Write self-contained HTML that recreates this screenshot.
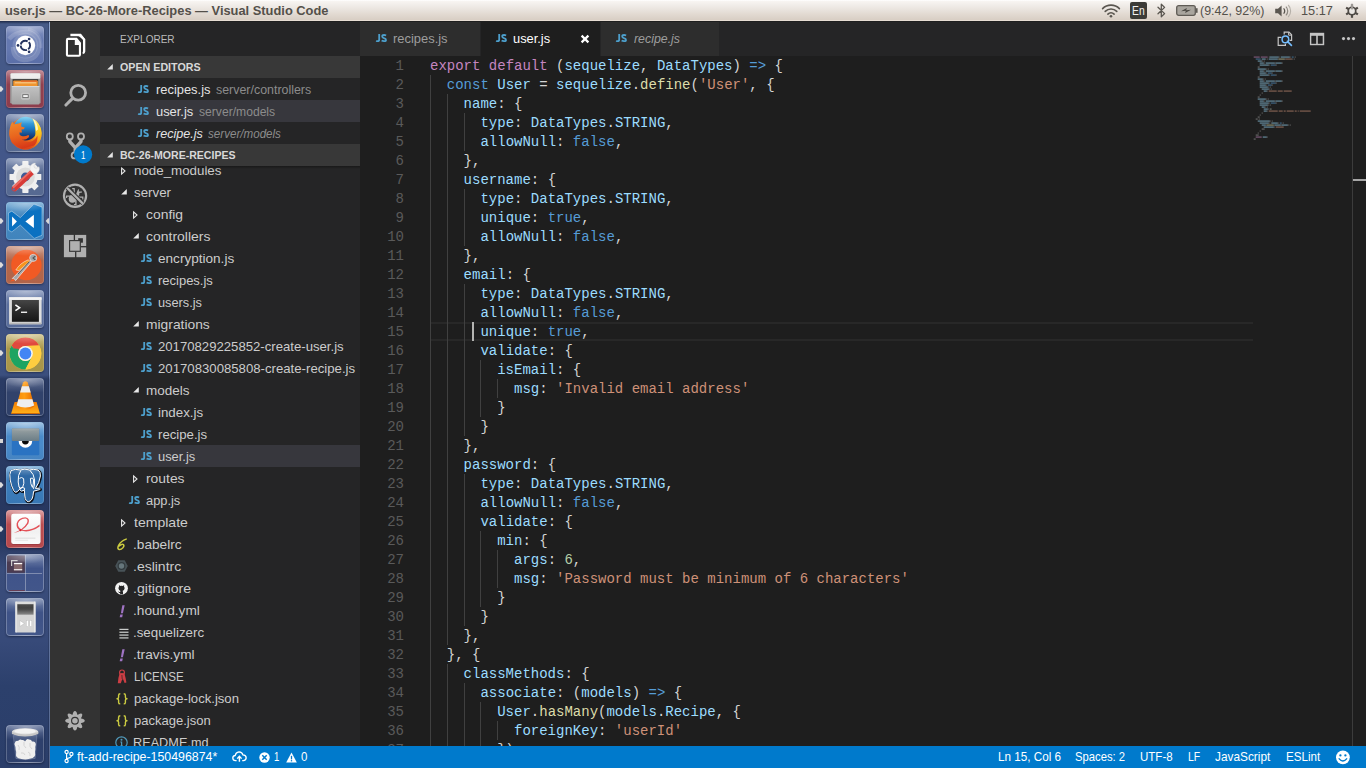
<!DOCTYPE html>
<html><head><meta charset="utf-8"><title>user.js</title>
<style>*{margin:0;padding:0;box-sizing:border-box}
html,body{width:1366px;height:768px;overflow:hidden;background:#1e1e1e;font-family:"Liberation Sans",sans-serif;}
.abs{position:absolute}
svg{position:absolute;overflow:visible}
#panel{position:absolute;left:0;top:0;width:1366px;height:21px;background:linear-gradient(#ffffff 0px,#f7f4f1 1.5px,#ece7e2 8px,#e2dad2 14px,#d9cfc5 19.5px,#e7ddd3 20px,#e7ddd3 21px);}
#launcher{position:absolute;left:0;top:21px;width:50px;height:747px;background:linear-gradient(#465a87 0px,#42568a 180px,#3b4f7e 354px,#2a3b64 358px,#27375f 520px,#3a4d7b 548px,#374a79 620px,#2c406c 665px,#2b3e6a 747px);}
#act{position:absolute;left:50px;top:21px;width:50px;height:725px;background:#333333;}
#side{position:absolute;left:100px;top:21px;width:260px;height:725px;background:#252526;}
#tabs{position:absolute;left:360px;top:21px;width:1006px;height:35px;background:#252526;}
#editor{position:absolute;left:360px;top:56px;width:1006px;height:690px;background:#1e1e1e;overflow:hidden;}
#status{position:absolute;left:50px;top:746px;width:1316px;height:22px;background:#007acc;}
.t{position:absolute;white-space:nowrap;transform-origin:0 50%;}
.hdr{position:absolute;left:100px;width:260px;height:22px;background:#383838;}
.row{position:absolute;left:100px;width:260px;height:22px;}
.sel{background:#37373d;}
.code{position:absolute;left:70px;height:19px;line-height:19px;font-family:"Liberation Mono",monospace;font-size:14px;color:#d4d4d4;white-space:pre;}
.ln{position:absolute;left:0;width:44px;text-align:right;height:19px;line-height:19px;font-family:"Liberation Mono",monospace;font-size:14px;color:#5a5a5a;}
.k{color:#c586c0}.b{color:#569cd6}.v{color:#9cdcfe}.s{color:#ce9178}.f{color:#dcdcaa}.n{color:#b5cea8}
.g{position:absolute;width:1px;background:#404040;}
.tile{position:absolute;left:6px;width:38px;height:38px;border-radius:4px;overflow:hidden}
</style></head>
<body>
<div id="panel"><span class="t" style="left:4.83px;top:2.50px;font-size:13px;line-height:16px;color:#54504a;font-weight:bold;transform:scaleX(0.9892);">user.js — BC-26-More-Recipes — Visual Studio Code</span><svg style="left:1101px;top:4px" width="20" height="14" viewBox="0 0 20 14">
<g fill="none" stroke="#5a5650" stroke-width="1.6" stroke-linecap="round">
<path d="M1.6 4.6 A11.8 11.8 0 0 1 18.4 4.6"/>
<path d="M4.2 7.4 A8.2 8.2 0 0 1 15.8 7.4"/>
<path d="M6.9 10.1 A4.4 4.4 0 0 1 13.1 10.1"/>
</g><circle cx="10" cy="12.3" r="1.3" fill="#5a5650"/></svg><div class="abs" style="left:1130px;top:2px;width:17px;height:17px;background:#3c3b37;border-radius:2px"></div><span class="t" style="left:1132.29px;top:2.84px;font-size:12px;line-height:16px;color:#f2f1ef;transform:scaleX(0.8607);">En</span><svg style="left:1156px;top:3px" width="11" height="15" viewBox="0 0 11 15">
<path d="M2 4.2 L8.6 10.6 L5.3 13.8 L5.3 1.2 L8.6 4.4 L2 10.8" fill="none" stroke="#5a5650" stroke-width="1.3" stroke-linejoin="round" stroke-linecap="round"/></svg><svg style="left:1176px;top:5px" width="22" height="11" viewBox="0 0 22 11">
<rect x="0.7" y="0.7" width="18.6" height="9.6" rx="2" fill="#a9a59e" stroke="#5f5b55" stroke-width="1.3"/>
<rect x="20" y="3.2" width="1.6" height="4.6" fill="#5f5b55"/>
<path d="M5 6.2 L10.8 3 L10.2 5.2 L15 4.8 L9.2 8 L9.8 5.8 Z" fill="#4a4742"/></svg><span class="t" style="left:1200.01px;top:2.50px;font-size:13px;line-height:16px;color:#54504a;transform:scaleX(0.9585);">(9:42, 92%)</span><svg style="left:1274px;top:4px" width="18" height="14" viewBox="0 0 18 14">
<path d="M1.2 4.8 H4 L7.6 1.6 V12.4 L4 9.2 H1.2 Z" fill="#5a5650"/>
<path d="M9.6 4.4 A3.6 3.6 0 0 1 9.6 9.6" fill="none" stroke="#5a5650" stroke-width="1.3"/>
<path d="M11.9 2.6 A6.2 6.2 0 0 1 11.9 11.4" fill="none" stroke="#8d8881" stroke-width="1.2"/>
<path d="M14.2 1 A8.6 8.6 0 0 1 14.2 13" fill="none" stroke="#b5b0a8" stroke-width="1.1"/></svg><span class="t" style="left:1300.89px;top:2.50px;font-size:13px;line-height:16px;color:#54504a;transform:scaleX(0.9799);">15:17</span><svg style="left:1344px;top:3px" width="16" height="16" viewBox="0 0 16 16">
<g stroke="#4e4a45" stroke-width="2.2" stroke-linecap="butt">
<path d="M8 8 L8 1.2"/><path d="M8 8 L13.9 4.6"/><path d="M8 8 L13.9 11.4"/><path d="M8 8 L8 14.8"/><path d="M8 8 L2.1 11.4"/><path d="M8 8 L2.1 4.6"/></g>
<circle cx="8" cy="8" r="4.6" fill="#4e4a45"/><circle cx="8" cy="8" r="2.9" fill="#e9e6e2"/>
<rect x="7.1" y="0.6" width="1.8" height="6.4" fill="#e9e6e2"/><rect x="7.55" y="0.8" width="0.9" height="5.6" fill="#4e4a45"/></svg></div>
<div id="launcher"></div><div class="abs" style="left:0;top:21px;width:50px;height:3px;background:linear-gradient(rgba(16,24,48,0.75),rgba(16,24,48,0))"></div><div class="abs" style="left:49px;top:22px;width:1px;height:746px;background:linear-gradient(#93a8d0 0px,#8ea3cc 352px,#5d709a 358px,#4f628d 520px,#6678a2 560px,#55688f 747px)"></div><div class="abs" style="left:48px;top:22px;width:1px;height:746px;background:rgba(20,30,60,0.25)"></div><div class="tile" style="top:26px;background:linear-gradient(#8d9cc7 0%,#6478b0 38%,#6478b0 60%,#5a6ea7 100%);box-shadow:0 1px 2px rgba(10,15,35,0.45)"><svg style="left:0;top:0" width="38" height="38" viewBox="0 0 38 38"><defs><radialGradient id="dg" cx="0.5" cy="0.5" r="0.5"><stop offset="0" stop-color="#fff"/><stop offset="0.92" stop-color="#fff"/><stop offset="1" stop-color="#e6e8f0"/></radialGradient></defs>
<path d="M3 13 Q10 5 22 6 Q34 9 33 22 Q31 34 18 34 Q7 33 7 21" fill="none" stroke="rgba(255,255,255,0.17)" stroke-width="4.5"/><path d="M22 3 Q36 6 35 22" fill="none" stroke="rgba(255,255,255,0.12)" stroke-width="3"/>
<circle cx="19.4" cy="19.6" r="12.8" fill="rgba(255,255,255,0.13)"/>
<circle cx="19.4" cy="19.4" r="9.8" fill="url(#dg)"/>
<circle cx="19.4" cy="19.4" r="4.7" fill="none" stroke="#24335f" stroke-width="1.95" stroke-dasharray="8.6 1.24" stroke-dashoffset="4.3"/>
<circle cx="12" cy="19.4" r="1.35" fill="#24335f"/><circle cx="23.1" cy="13" r="1.35" fill="#24335f"/><circle cx="23.1" cy="25.8" r="1.35" fill="#24335f"/></svg><div class="abs" style="left:0;top:0;width:38px;height:38px;border-radius:4px;border:1px solid rgba(255,255,255,0.13);background:radial-gradient(ellipse 24px 9px at 19px 0px,rgba(255,255,255,0.35),rgba(255,255,255,0) 100%)"></div></div><div class="tile" style="top:70px;background:linear-gradient(#b97c88 0%,#90404f 38%,#90404f 60%,#8c3c4c 100%);box-shadow:0 1px 2px rgba(10,15,35,0.45)"><svg style="left:0;top:0" width="38" height="38" viewBox="0 0 38 38"><defs><linearGradient id="fg" x1="0" y1="0" x2="0" y2="1"><stop offset="0" stop-color="#c2c2c2"/><stop offset="1" stop-color="#a2a2a2"/></linearGradient></defs>
<rect x="4.2" y="3.4" width="30.4" height="30" rx="1.2" fill="#9c9c9c"/>
<rect x="4.6" y="3.2" width="29.6" height="5.6" rx="1" fill="#ececec"/>
<rect x="6.6" y="9.2" width="25.6" height="7" fill="#2e2e2e"/>
<rect x="7.2" y="10.6" width="24.6" height="5.6" rx="0.8" fill="#f0952f"/><rect x="15" y="10.4" width="16" height="1.6" fill="#e8702a"/><rect x="8.8" y="12.4" width="21.4" height="0.9" fill="#fbd9a6"/>
<rect x="5.8" y="16" width="27.6" height="18.6" rx="0.8" fill="url(#fg)"/><rect x="5.8" y="16" width="27.6" height="1" fill="#d8d8d8"/>
<rect x="15.4" y="23.2" width="8.2" height="6" rx="1.3" fill="#b9b9b9" stroke="#c9c9c9" stroke-width="0.8"/>
<rect x="16.4" y="24.2" width="6.2" height="3.9" rx="0.6" fill="#6a6a6a"/><rect x="17.2" y="25.1" width="4.6" height="2" fill="#f4f4f4"/></svg><div class="abs" style="left:0;top:0;width:38px;height:38px;border-radius:4px;border:1px solid rgba(255,255,255,0.13);background:radial-gradient(ellipse 24px 9px at 19px 0px,rgba(255,255,255,0.35),rgba(255,255,255,0) 100%)"></div></div><svg style="left:0;top:86px" width="4" height="6" viewBox="0 0 4 6"><path d="M0 0.3 H1.3 L3.5 3 L1.3 5.7 H0 Z" fill="#dcdcdc"/></svg><div class="tile" style="top:114px;background:linear-gradient(#8b9abb 0%,#586b93 38%,#586b93 60%,#566991 100%);box-shadow:0 1px 2px rgba(10,15,35,0.45)"><svg style="left:0;top:0" width="38" height="38" viewBox="0 0 38 38"><defs><linearGradient id="gl" x1="0" y1="0" x2="0" y2="1"><stop offset="0" stop-color="#5cc4ee"/><stop offset="0.45" stop-color="#1f82cc"/><stop offset="1" stop-color="#101f55"/></linearGradient>
<linearGradient id="fx" x1="0" y1="0" x2="0.25" y2="1"><stop offset="0" stop-color="#f08c2c"/><stop offset="0.55" stop-color="#e9651e"/><stop offset="1" stop-color="#d83a18"/></linearGradient>
<linearGradient id="fb" x1="0" y1="0" x2="1" y2="0"><stop offset="0" stop-color="#e9661e"/><stop offset="0.62" stop-color="#ee7a1c"/><stop offset="0.82" stop-color="#f9c41c"/><stop offset="0.93" stop-color="#fde24a"/><stop offset="1" stop-color="#f29a1c"/></linearGradient>
<linearGradient id="fy" x1="0" y1="0" x2="0" y2="1"><stop offset="0" stop-color="#fff0a0"/><stop offset="0.35" stop-color="#fcd822"/><stop offset="0.75" stop-color="#f7a81c"/><stop offset="1" stop-color="#ea6a1c"/></linearGradient><linearGradient id="fbv" x1="0" y1="0" x2="0" y2="1"><stop offset="0.55" stop-color="rgba(216,58,24,0)"/><stop offset="1" stop-color="rgba(216,58,24,0.9)"/></linearGradient></defs>
<circle cx="19.5" cy="19.4" r="16.1" fill="url(#fb)"/><circle cx="19.5" cy="19.4" r="16.1" fill="url(#fbv)"/>
<circle cx="19.6" cy="14.6" r="11.8" fill="url(#gl)"/>
<path d="M26.4 4.2 Q34.6 8.6 35.6 19 Q35.4 27 29.6 32 Q27 33 27.4 30 Q30 25 29.4 19 Q29.4 10.6 26.4 4.2 Z" fill="url(#fy)"/><path d="M27.4 5 Q31.6 9.4 32 15.6 L30 17 Q29.6 10 27.4 5 Z" fill="#fffbe0" opacity="0.85"/>
<path d="M6.3 7.6 L7.8 10.4 Q9.8 9.6 11.6 9.7 L16 8.2 Q14.6 10.4 15.2 12.4 L18.8 13.4 L17.8 15.2 L15.4 15.4 L16 18.6 L13.4 18.4 Q13 20.8 15.6 22 Q18.8 23 22.2 21 Q23.8 21.6 22.8 23.2 Q19.6 26.6 15.8 25.6 Q19.4 28.8 24.2 27.8 Q29.2 26.2 31.4 21.4 Q32.2 27.2 28.4 31.6 L16 35 L6 29 L3.4 21 Q3 13.6 6.3 7.6 Z" fill="url(#fx)"/></svg><div class="abs" style="left:0;top:0;width:38px;height:38px;border-radius:4px;border:1px solid rgba(255,255,255,0.13);background:radial-gradient(ellipse 24px 9px at 19px 0px,rgba(255,255,255,0.35),rgba(255,255,255,0) 100%)"></div></div><div class="tile" style="top:158px;background:linear-gradient(#8b9abb 0%,#586b93 38%,#586b93 60%,#566991 100%);box-shadow:0 1px 2px rgba(10,15,35,0.45)"><svg style="left:0;top:0" width="38" height="38" viewBox="0 0 38 38"><g transform="translate(19.4 19)"><rect x="-3.1" y="-15.9" width="6.2" height="6" rx="0.6" transform="rotate(0)" fill="#efefef"/><rect x="-3.1" y="-15.9" width="6.2" height="6" rx="0.6" transform="rotate(45)" fill="#efefef"/><rect x="-3.1" y="-15.9" width="6.2" height="6" rx="0.6" transform="rotate(90)" fill="#efefef"/><rect x="-3.1" y="-15.9" width="6.2" height="6" rx="0.6" transform="rotate(135)" fill="#efefef"/><rect x="-3.1" y="-15.9" width="6.2" height="6" rx="0.6" transform="rotate(180)" fill="#efefef"/><rect x="-3.1" y="-15.9" width="6.2" height="6" rx="0.6" transform="rotate(225)" fill="#efefef"/><rect x="-3.1" y="-15.9" width="6.2" height="6" rx="0.6" transform="rotate(270)" fill="#efefef"/><rect x="-3.1" y="-15.9" width="6.2" height="6" rx="0.6" transform="rotate(315)" fill="#efefef"/><circle r="12.4" fill="#efefef"/><circle r="9.4" fill="#dcdcdc"/><circle r="4.4" fill="#3d5996"/></g>
<path d="M24 12.4 Q23 8.4 26.2 6 Q28 4.8 29.6 5.2 Q26.6 8 28.6 10 Q30.8 11.6 33 8.4 Q34.4 12 31.6 14.8 Q29 16.8 26.4 15.6 Z" fill="#f4f4f4" stroke="#cfcfcf" stroke-width="0.4"/>
<path d="M24.2 12.6 L27.8 16.2 L10.6 32.6 Q8.6 34.4 6.4 32.6 Q4.6 30.4 6.6 28.4 Z" fill="#d83a36"/>
<path d="M24.2 12.6 L25.4 13.8 L7.6 30.6 Q6.6 29.4 6.6 28.4 Z" fill="#ea6a62"/>
<circle cx="7.7" cy="31.4" r="1.1" fill="#5d6fa0"/></svg><div class="abs" style="left:0;top:0;width:38px;height:38px;border-radius:4px;border:1px solid rgba(255,255,255,0.13);background:radial-gradient(ellipse 24px 9px at 19px 0px,rgba(255,255,255,0.35),rgba(255,255,255,0) 100%)"></div></div><div class="tile" style="top:202px;background:linear-gradient(#7db0d8 0%,#4587be 38%,#4587be 60%,#3f84bd 100%);box-shadow:0 1px 2px rgba(10,15,35,0.45)"><svg style="left:0;top:0" width="38" height="38" viewBox="0 0 38 38"><path d="M2.46 10.9 L5.85 9.2 L14.3 15.65 L27.85 2.1 L36 5.15 V33.25 L28.2 36.4 L14.3 23.1 L5.85 29.9 L2.46 28.2 Z" fill="#0a71c1" stroke="rgba(255,255,255,0.55)" stroke-width="0.7"/>
<path d="M6.05 14.6 L10.9 19.5 L6.05 24.45 Z" fill="#ffffff"/><path d="M27.85 12.7 L19.4 19.5 L27.85 26 Z" fill="#ffffff"/></svg><div class="abs" style="left:0;top:0;width:38px;height:38px;border-radius:4px;border:1px solid rgba(255,255,255,0.13);background:radial-gradient(ellipse 24px 9px at 19px 0px,rgba(255,255,255,0.35),rgba(255,255,255,0) 100%)"></div></div><svg style="left:0;top:218px" width="4" height="6" viewBox="0 0 4 6"><path d="M0 0.3 H1.3 L3.5 3 L1.3 5.7 H0 Z" fill="#dcdcdc"/></svg><svg style="left:45px;top:218px" width="4" height="6" viewBox="0 0 4 6"><path d="M4 0.2 H3 L0.7 3 L3 5.8 H4 Z" fill="#d6d6d6"/></svg><div class="tile" style="top:246px;background:linear-gradient(#cfa08f 0%,#b1664b 38%,#b1664b 60%,#b0644a 100%);box-shadow:0 1px 2px rgba(10,15,35,0.45)"><svg style="left:0;top:0" width="38" height="38" viewBox="0 0 38 38"><circle cx="20.4" cy="19" r="15.2" fill="#f15a24"/>
<path d="M9.8 24 Q14 17 22.4 13.8 L24 15.6 L13 24.6 Z" fill="#f7941d" stroke="#fff" stroke-width="0.5"/>
<path d="M24.6 14.2 L25.8 15.6 L9.6 34.6 L8.6 33 L6.2 32.6 Z" fill="#a8a8a8" stroke="#ffffff" stroke-width="0.6"/>
<path d="M23.4 15.6 L12 28" stroke="#4a4a4a" stroke-width="0.9"/>
<path d="M4 35.4 L7 32.4 L8.8 34.8 Z" fill="#f15a24"/>
<circle cx="27.2" cy="11.9" r="3.6" fill="#a6a6a6" stroke="#f0f0f0" stroke-width="0.6"/><path d="M29.4 10 L27 12 L29.4 14" stroke="#555" stroke-width="1.1" fill="none"/></svg><div class="abs" style="left:0;top:0;width:38px;height:38px;border-radius:4px;border:1px solid rgba(255,255,255,0.13);background:radial-gradient(ellipse 24px 9px at 19px 0px,rgba(255,255,255,0.35),rgba(255,255,255,0) 100%)"></div></div><svg style="left:0;top:262px" width="4" height="6" viewBox="0 0 4 6"><path d="M0 0.3 H1.3 L3.5 3 L1.3 5.7 H0 Z" fill="#dcdcdc"/></svg><div class="tile" style="top:290px;background:linear-gradient(#8d9dc0 0%,#5b6f9d 38%,#5b6f9d 60%,#586c99 100%);box-shadow:0 1px 2px rgba(10,15,35,0.45)"><svg style="left:0;top:0" width="38" height="38" viewBox="0 0 38 38"><defs><linearGradient id="tg" x1="0" y1="0" x2="0" y2="1"><stop offset="0" stop-color="#464646"/><stop offset="0.5" stop-color="#2b2b2b"/><stop offset="1" stop-color="#161616"/></linearGradient></defs>
<rect x="3.1" y="7.2" width="32.5" height="27.1" rx="0.8" fill="#dedede"/><rect x="3.1" y="7.2" width="32.5" height="2.6" fill="#f4f4f4"/><rect x="3.1" y="32.6" width="32.5" height="1.7" fill="#b8b8b8"/>
<rect x="5.9" y="10" width="27" height="21.8" fill="url(#tg)"/>
<path d="M9.4 14.8 L13.6 17.8 L9.4 20.6" fill="none" stroke="#ffffff" stroke-width="1.6"/><rect x="15" y="21.6" width="6.1" height="1.3" fill="#ffffff"/></svg><div class="abs" style="left:0;top:0;width:38px;height:38px;border-radius:4px;border:1px solid rgba(255,255,255,0.13);background:radial-gradient(ellipse 24px 9px at 19px 0px,rgba(255,255,255,0.35),rgba(255,255,255,0) 100%)"></div></div><div class="tile" style="top:334px;background:linear-gradient(#d2c793 0%,#aa984c 38%,#aa984c 60%,#a89548 100%);box-shadow:0 1px 2px rgba(10,15,35,0.45)"><svg style="left:0;top:0" width="38" height="38" viewBox="0 0 38 38"><circle cx="19.4" cy="19.5" r="15.9" fill="#ffcd40"/><path d="M5.63 11.55 A15.9 15.9 0 0 1 33.17 11.55 L19.40 12.10 A7.4 7.4 0 0 0 12.99 23.20 Z" fill="#e0493e"/><path d="M19.40 35.40 A15.9 15.9 0 0 1 5.63 11.55 L12.99 23.20 A7.4 7.4 0 0 0 25.81 23.20 Z" fill="#1da462"/><path d="M33.17 11.55 A15.9 15.9 0 0 1 19.40 35.40 L25.81 23.20 A7.4 7.4 0 0 0 19.40 12.10 Z" fill="#ffcd40"/><path d="M3.6 14 L12.2 25.8 L12.8 15 Z" fill="#1da462"/><circle cx="19.4" cy="19.5" r="7.4" fill="#f4f4f4"/><circle cx="19.4" cy="19.5" r="5.9" fill="#4285f4"/></svg><div class="abs" style="left:0;top:0;width:38px;height:38px;border-radius:4px;border:1px solid rgba(255,255,255,0.13);background:radial-gradient(ellipse 24px 9px at 19px 0px,rgba(255,255,255,0.35),rgba(255,255,255,0) 100%)"></div></div><svg style="left:0;top:350px" width="4" height="6" viewBox="0 0 4 6"><path d="M0 0.3 H1.3 L3.5 3 L1.3 5.7 H0 Z" fill="#dcdcdc"/></svg><div class="tile" style="top:378px;background:linear-gradient(#6d7b9d 0%,#31426b 38%,#31426b 60%,#2f4069 100%);box-shadow:0 1px 2px rgba(10,15,35,0.45)"><svg style="left:0;top:0" width="38" height="38" viewBox="0 0 38 38"><defs><linearGradient id="vo" x1="0" y1="0" x2="1" y2="0"><stop offset="0" stop-color="#f58a0a"/><stop offset="0.45" stop-color="#ff9d12"/><stop offset="1" stop-color="#e86c00"/></linearGradient>
<linearGradient id="vb" x1="0" y1="0" x2="0" y2="1"><stop offset="0" stop-color="#f57c00"/><stop offset="1" stop-color="#ffb21a"/></linearGradient></defs>
<path d="M8.6 24.1 H30.6 L33.9 35.6 H5.2 Z" fill="url(#vb)"/><rect x="5.2" y="35" width="28.7" height="0.9" fill="#d86a00"/>
<path d="M17 4.6 Q19.4 2 21.8 4.6 L28.4 28 Q25 31.6 19.4 31.6 Q13.8 31.6 10.4 28 Z" fill="url(#vo)"/>
<path d="M15.9 8.3 H22.9 L24.7 14.6 H14.1 Z" fill="#eeeeee"/><path d="M12.4 21.2 H26.4 L28.2 27.6 Q24 29.6 19.4 29.6 Q14.8 29.6 10.6 27.6 Z" fill="#eeeeee"/></svg><div class="abs" style="left:0;top:0;width:38px;height:38px;border-radius:4px;border:1px solid rgba(255,255,255,0.2);background:radial-gradient(ellipse 24px 9px at 19px 0px,rgba(255,255,255,0.35),rgba(255,255,255,0) 100%)"></div></div><div class="tile" style="top:422px;background:linear-gradient(#8fb8de 0%,#4a8bca 38%,#4a8bca 60%,#4584c2 100%);box-shadow:0 1px 2px rgba(10,15,35,0.45)"><svg style="left:0;top:0" width="38" height="38" viewBox="0 0 38 38"><defs><linearGradient id="eg" x1="0" y1="0" x2="0" y2="1"><stop offset="0" stop-color="#9aa3a4"/><stop offset="1" stop-color="#6b7d86"/></linearGradient></defs>
<rect x="5.85" y="6.2" width="27.45" height="27" rx="1.2" fill="#2a73c2"/><rect x="5.85" y="6.2" width="27.45" height="12.8" rx="1" fill="url(#eg)"/>
<path d="M12.6 19 A6.8 6.8 0 0 0 26.2 19 Z" fill="#ffffff"/><path d="M16 19 A3.4 3.4 0 0 0 22.8 19 Z" fill="#0a0a0a"/></svg><div class="abs" style="left:0;top:0;width:38px;height:38px;border-radius:4px;border:1px solid rgba(255,255,255,0.13);background:radial-gradient(ellipse 24px 9px at 19px 0px,rgba(255,255,255,0.35),rgba(255,255,255,0) 100%)"></div></div><div class="abs" style="left:0;top:439px;width:3px;height:4px;background:#d6d6d6"></div><div class="tile" style="top:466px;background:linear-gradient(#7badd8 0%,#3b7cba 38%,#3b7cba 60%,#3877b4 100%);box-shadow:0 1px 2px rgba(10,15,35,0.45)"><svg style="left:0;top:0" width="38" height="38" viewBox="0 0 38 38"><g fill="#2d68a5" stroke="#0b0f18" stroke-width="2.4" stroke-linejoin="round" transform="translate(0.5 0.6)"><path d="M5 4.6 Q3 8 4.2 14 Q5.4 20.4 7.6 24.4 Q9.4 27.6 11.4 25.6 L13.4 23.4 Q15 26.4 18.4 24.2 L18.8 30 Q19.4 35.6 22.4 35.6 Q26.2 35 27 29.6 L27.6 25.2 L33.6 23.6 Q35 22.8 33.6 22.2 L29.4 22.4 Q33.4 17 34.4 10 Q34.8 5.6 32 4 Q27 2.6 23.6 4 Q18.6 2.2 14.4 4 Q9 2.4 5 4.6 Z"/></g>
<g fill="#2d68a5" stroke="#ffffff" stroke-width="1" stroke-linejoin="round"><path d="M5 4.6 Q3 8 4.2 14 Q5.4 20.4 7.6 24.4 Q9.4 27.6 11.4 25.6 L13.4 23.4 Q15 26.4 18.4 24.2 L18.8 30 Q19.4 35.6 22.4 35.6 Q26.2 35 27 29.6 L27.6 25.2 L33.6 23.6 Q35 22.8 33.6 22.2 L29.4 22.4 Q33.4 17 34.4 10 Q34.8 5.6 32 4 Q27 2.6 23.6 4 Q18.6 2.2 14.4 4 Q9 2.4 5 4.6 Z"/>
<path d="M14.8 4.4 Q11.6 9 12.2 16 Q12.6 21 14.4 23.4" fill="none"/><path d="M13.4 12.4 Q15.6 10.6 17.6 12.6 Q18.6 17.6 16.6 21.4 Q14.6 23.6 13 20.6" fill="none"/>
<path d="M23.8 4.2 Q28 8 28.6 14 Q28.8 19.6 27.4 22.8" fill="none"/><path d="M24.4 12.4 Q27 11 27.6 14 Q27.4 18.6 26.4 21.4 Q24.4 18.6 24.4 12.4 Z" fill="none"/>
<path d="M13.6 23.2 L16 21.4 L18.6 22.2 L18.4 24.2" fill="none"/></g></svg><div class="abs" style="left:0;top:0;width:38px;height:38px;border-radius:4px;border:1px solid rgba(255,255,255,0.13);background:radial-gradient(ellipse 24px 9px at 19px 0px,rgba(255,255,255,0.35),rgba(255,255,255,0) 100%)"></div></div><svg style="left:0;top:482px" width="4" height="6" viewBox="0 0 4 6"><path d="M0 0.3 H1.3 L3.5 3 L1.3 5.7 H0 Z" fill="#dcdcdc"/></svg><div class="tile" style="top:510px;background:linear-gradient(#d89496 0%,#b94c50 38%,#b94c50 60%,#b5484c 100%);box-shadow:0 1px 2px rgba(10,15,35,0.45)"><svg style="left:0;top:0" width="38" height="38" viewBox="0 0 38 38"><defs><linearGradient id="pw" x1="0" y1="0" x2="0" y2="1"><stop offset="0" stop-color="#ffffff"/><stop offset="0.6" stop-color="#f1f1f1"/><stop offset="1" stop-color="#fbfbfb"/></linearGradient></defs>
<rect x="5.4" y="4.6" width="29.2" height="30" rx="2.2" fill="rgba(60,10,15,0.35)"/>
<rect x="5.2" y="3.8" width="29.4" height="30.1" rx="2.2" fill="url(#pw)"/>
<path d="M7.6 23 Q18 20.6 22.4 13.4 Q24.4 8 19.4 7.2 Q12.4 7.4 10.6 13.4 Q10 18.6 14.6 20.6 Q24 23.4 33.6 16.6 L33.6 14.6 Q25 21.6 15.4 19.4 Q11.8 17.8 12 13.6 Q13.4 9 19.2 8.6 Q22.6 9 21 13 Q17 19.8 7.6 23 Z" fill="#e0343c" opacity="0.85"/>
<circle cx="14.4" cy="20.2" r="1" fill="#d81e28"/>
<rect x="9.2" y="27.6" width="20.3" height="1.1" fill="#dedede"/><rect x="9.2" y="29.8" width="12.9" height="1" fill="#e6e6e6"/></svg><div class="abs" style="left:0;top:0;width:38px;height:38px;border-radius:4px;border:1px solid rgba(255,255,255,0.13);background:radial-gradient(ellipse 24px 9px at 19px 0px,rgba(255,255,255,0.35),rgba(255,255,255,0) 100%)"></div></div><svg style="left:0;top:526px" width="4" height="6" viewBox="0 0 4 6"><path d="M0 0.3 H1.3 L3.5 3 L1.3 5.7 H0 Z" fill="#dcdcdc"/></svg><div class="tile" style="top:554px;background:linear-gradient(#7f8fb3 0%,#40548a 38%,#40548a 60%,#42568a 100%);box-shadow:0 1px 2px rgba(10,15,35,0.45)"><svg style="left:0;top:0" width="38" height="38" viewBox="0 0 38 38"><rect x="1" y="1.6" width="17.8" height="17.2" fill="#4b3c52"/><rect x="1" y="1.6" width="17.8" height="6" fill="rgba(255,255,255,0.12)"/>
<rect x="19" y="1" width="1" height="36" fill="rgba(255,255,255,0.33)"/><rect x="1" y="19" width="35" height="1" fill="rgba(255,255,255,0.33)"/>
<path d="M5.6 12 V6.6 H11.6" fill="none" stroke="#cfcfcf" stroke-width="1.2"/>
<rect x="7.9" y="8.9" width="8.3" height="7.4" fill="#86696c"/><rect x="7.9" y="8.9" width="8.3" height="1.3" fill="#ffffff"/><rect x="7.9" y="15.2" width="8.3" height="1.1" fill="#ffffff"/>
<rect x="3.1" y="36" width="15.6" height="0.9" fill="#6d3c4e"/></svg><div class="abs" style="left:0;top:0;width:38px;height:38px;border-radius:4px;border:1px solid rgba(255,255,255,0.28);background:radial-gradient(ellipse 24px 9px at 19px 0px,rgba(255,255,255,0.35),rgba(255,255,255,0) 100%)"></div></div><div class="tile" style="top:598px;background:linear-gradient(#7f8fb3 0%,#3f5387 38%,#3f5387 60%,#435789 100%);box-shadow:0 1px 2px rgba(10,15,35,0.45)"><svg style="left:0;top:0" width="38" height="38" viewBox="0 0 38 38"><defs><linearGradient id="ms" x1="0" y1="0" x2="0" y2="1"><stop offset="0" stop-color="#303030"/><stop offset="0.5" stop-color="#4a4a4a"/><stop offset="1" stop-color="#8a8a8a"/></linearGradient></defs>
<rect x="9.4" y="3.5" width="20.1" height="31.1" rx="1.4" fill="#d5d5d5"/><rect x="9.4" y="3.5" width="1.2" height="31" fill="#ececec"/><rect x="28.3" y="3.5" width="1.2" height="31" fill="#ececec"/>
<rect x="11.3" y="6.2" width="16.2" height="10.5" fill="url(#ms)"/>
<path d="M13.8 22.4 L18.4 25.5 L13.8 28.5 Z" fill="#ffffff" stroke="#b9b9b9" stroke-width="0.5"/><rect x="20.4" y="22.4" width="2" height="6.1" fill="#ffffff" stroke="#b9b9b9" stroke-width="0.4"/><rect x="23.8" y="22.4" width="2" height="6.1" fill="#ffffff" stroke="#b9b9b9" stroke-width="0.4"/></svg><div class="abs" style="left:0;top:0;width:38px;height:38px;border-radius:4px;border:1px solid rgba(255,255,255,0.25);background:radial-gradient(ellipse 24px 9px at 19px 0px,rgba(255,255,255,0.35),rgba(255,255,255,0) 100%)"></div></div><div class="tile" style="top:725px;background:linear-gradient(#6b7ba1 0%,#2e406c 38%,#2e406c 60%,#2f416d 100%);box-shadow:0 1px 2px rgba(10,15,35,0.45)"><svg style="left:0;top:0" width="38" height="38" viewBox="0 0 38 38"><path d="M7.2 10.6 L9.9 33.4 Q19.5 36 29.2 33.4 L30.9 10.6 Z" fill="rgba(200,210,235,0.18)" stroke="rgba(220,225,240,0.35)" stroke-width="0.6"/>
<path d="M8.4 19 Q9.4 15 12 16 Q13.6 13.4 16 15 Q18.4 14.6 19 16.6 Q20.6 13.2 23 14.4 Q25.6 14.4 26 16.6 Q29.6 16 29.8 19.4 Q29 21.6 29.4 24 Q28.6 27 29.2 30 Q29 33.6 19.6 34.4 Q10 33.8 10 30.4 Q10.6 27 9.6 24.6 Q9.6 21.6 8.4 19 Z" fill="#efefef"/>
<path d="M12 20 Q14 22 13 25 M18 17 Q17 21 20 23 M24 18 Q23 22 26 24 M15 28 Q18 27 19 30 M22 27 Q25 28 24 31" stroke="#cdcdcd" stroke-width="0.8" fill="none"/>
<ellipse cx="19.1" cy="7.1" rx="13.2" ry="3.9" fill="#dcdcdc"/><ellipse cx="19.1" cy="6.2" rx="10.6" ry="2.4" fill="#f1f1f1"/>
<path d="M5.9 7.1 V9 Q19.1 14 32.3 9 V7.1 Q19.1 12 5.9 7.1 Z" fill="#c6c6c6"/></svg><div class="abs" style="left:0;top:0;width:38px;height:38px;border-radius:4px;border:1px solid rgba(255,255,255,0.22);background:radial-gradient(ellipse 24px 9px at 19px 0px,rgba(255,255,255,0.35),rgba(255,255,255,0) 100%)"></div></div>
<div id="act"></div><svg style="left:50px;top:21px" width="50" height="725" viewBox="50 21 50 725">
<!-- files icon (active, white) -->
<path d="M70.4 35 H80.4 L84.15 39.6 V51.6 Q84.15 52.9 82.6 53.1" fill="none" stroke="#ffffff" stroke-width="2.3" stroke-linejoin="miter"/>
<path d="M80.4 33.9 L85.3 39.6 L83 39.6 L78.6 36.1 Z" fill="#ffffff"/>
<path d="M68 38.85 H76.4 L79.95 43.2 V54.7 Q79.95 55.75 78.9 55.75 H68 Q66.95 55.75 66.95 54.7 V39.9 Q66.95 38.85 68 38.85 Z" fill="#333333" stroke="#333333" stroke-width="4.4"/>
<path d="M68 38.85 H76.4 L79.95 43.2 V54.7 Q79.95 55.75 78.9 55.75 H68 Q66.95 55.75 66.95 54.7 V39.9 Q66.95 38.85 68 38.85 Z" fill="none" stroke="#ffffff" stroke-width="2.1"/>
<path d="M74.8 38.9 H76.6 L80 43.1 V45.05 H74.8 Z" fill="#ffffff"/>
<!-- search -->
<circle cx="78.2" cy="92.7" r="7.4" fill="none" stroke="#b0b0b0" stroke-width="2.8"/>
<path d="M72.6 98.3 L65.9 105" stroke="#b0b0b0" stroke-width="3.1" stroke-linecap="round"/>
<!-- git -->
<g fill="none" stroke="#b0b0b0">
<path d="M69.8 139.6 V141.6 L75.2 147.6 V152.2" stroke-width="3.3" stroke-linejoin="round"/>
<path d="M81 139.6 V141.6 L75.6 147.6" stroke-width="3.3" stroke-linejoin="round"/>
<circle cx="69.8" cy="136.4" r="3" stroke-width="1.8" fill="#333333"/>
<circle cx="81" cy="136.4" r="3" stroke-width="1.8" fill="#333333"/>
<circle cx="74.6" cy="155.4" r="3" stroke-width="1.8" fill="#333333"/>
</g>
<circle cx="83.1" cy="154.4" r="9.1" fill="#007acc"/>
<!-- debug -->
<circle cx="75.05" cy="195.8" r="11.1" fill="none" stroke="#b0b0b0" stroke-width="2.2"/>
<g fill="#b0b0b0" stroke="none">
<ellipse cx="72.4" cy="198.8" rx="3.7" ry="3.9"/>
<path d="M75.6 195.6 L77.2 191.2 L78.2 189.2 L79 189.4 L78.8 191.6 L82 191.6 L82 192.6 L79.4 193 Q79.8 195.4 77.8 197 Z"/>
<path d="M66 195.6 H71.4 V196.8 H67.2 V198 H66 Z"/>
<path d="M72.2 188 H74.8 V193.2 H73.6 V189.2 H72.2 Z"/>
<path d="M78 196.6 H83.4 V199.4 H82.2 V197.8 H78 Z"/>
<path d="M75.2 199.6 H76.6 V205.2 H74 V204 H75.2 Z"/>
</g>
<path d="M67.2 188 L82.9 203.6" stroke="#333333" stroke-width="4.2"/>
<path d="M67.2 188 L82.9 203.6" stroke="#b0b0b0" stroke-width="2.3"/>
<!-- extensions -->
<rect x="63.9" y="234.9" width="22.3" height="22.3" fill="#b0b0b0"/>
<rect x="73.75" y="234" width="1.3" height="6.2" fill="#333333"/>
<rect x="75.05" y="251.6" width="1.3" height="6.4" fill="#333333"/>
<rect x="80.6" y="246.05" width="6.4" height="1.3" fill="#333333"/>
<rect x="78.2" y="238.2" width="4.7" height="4.5" fill="#333333"/>
<rect x="69.6" y="240.6" width="10.7" height="10.7" fill="#b0b0b0" stroke="#333333" stroke-width="1.1"/>
<!-- gear -->
<g transform="translate(74.95 720.8)">
<g fill="#b0b0b0"><path transform="rotate(0)" d="M-2.5 -5.5 Q-1.8 -9.8 0 -9.8 Q1.8 -9.8 2.5 -5.5 Z"/><path transform="rotate(45)" d="M-2.5 -5.5 Q-1.8 -9.8 0 -9.8 Q1.8 -9.8 2.5 -5.5 Z"/><path transform="rotate(90)" d="M-2.5 -5.5 Q-1.8 -9.8 0 -9.8 Q1.8 -9.8 2.5 -5.5 Z"/><path transform="rotate(135)" d="M-2.5 -5.5 Q-1.8 -9.8 0 -9.8 Q1.8 -9.8 2.5 -5.5 Z"/><path transform="rotate(180)" d="M-2.5 -5.5 Q-1.8 -9.8 0 -9.8 Q1.8 -9.8 2.5 -5.5 Z"/><path transform="rotate(225)" d="M-2.5 -5.5 Q-1.8 -9.8 0 -9.8 Q1.8 -9.8 2.5 -5.5 Z"/><path transform="rotate(270)" d="M-2.5 -5.5 Q-1.8 -9.8 0 -9.8 Q1.8 -9.8 2.5 -5.5 Z"/><path transform="rotate(315)" d="M-2.5 -5.5 Q-1.8 -9.8 0 -9.8 Q1.8 -9.8 2.5 -5.5 Z"/>
<circle r="6.6"/></g>
<circle r="3.35" fill="none" stroke="#333333" stroke-width="1.15"/>
</g>
</svg><span class="t" style="left:80.74px;top:146.99px;font-size:11px;line-height:16px;color:#ffffff;transform:scaleX(0.7206);">1</span>
<div id="side"></div><svg style="left:120.8px;top:166.5px" width="5" height="8" viewBox="0 0 5 8"><path d="M0.6 0.9 L4.0 4 L0.6 7.1 Z" fill="none" stroke="#e8e8e8" stroke-width="1.1" stroke-linejoin="miter"/></svg><span class="t" style="left:133.54px;top:162.50px;font-size:13px;line-height:16px;color:#cccccc;transform:scaleX(1.0253);">node_modules</span><svg style="left:120.6px;top:189.4px" width="6" height="6" viewBox="0 0 6 6"><path d="M5.8 0 V5.6 H0.2 Z" fill="#e8e8e8"/></svg><span class="t" style="left:133.77px;top:184.50px;font-size:13px;line-height:16px;color:#cccccc;transform:scaleX(1.0240);">server</span><svg style="left:132.9px;top:210.5px" width="5" height="8" viewBox="0 0 5 8"><path d="M0.6 0.9 L4.0 4 L0.6 7.1 Z" fill="none" stroke="#e8e8e8" stroke-width="1.1" stroke-linejoin="miter"/></svg><span class="t" style="left:145.86px;top:206.50px;font-size:13px;line-height:16px;color:#cccccc;transform:scaleX(1.0681);">config</span><svg style="left:132.7px;top:233.4px" width="6" height="6" viewBox="0 0 6 6"><path d="M5.8 0 V5.6 H0.2 Z" fill="#e8e8e8"/></svg><span class="t" style="left:145.85px;top:228.50px;font-size:13px;line-height:16px;color:#cccccc;transform:scaleX(1.0738);">controllers</span><svg style="left:140.9px;top:254.3px" width="11" height="9" viewBox="0 0 11 9"><g fill="none" stroke="#4d9fcc" stroke-width="1.8" stroke-linecap="butt" stroke-linejoin="round"><path d="M3.2 0.1 V5.5 Q3.2 7.2 1.7 7.2 Q0.9 7.2 0.2 6.7"/><path d="M10.1 1.5 Q9.2 1 8 1 Q6.2 1 6.2 2.4 Q6.2 3.5 8 4.05 Q10 4.6 10 5.9 Q10 7.2 8 7.2 Q6.6 7.2 5.6 6.6"/></g></svg><span class="t" style="left:157.92px;top:250.50px;font-size:13px;line-height:16px;color:#cccccc;transform:scaleX(1.0439);">encryption.js</span><svg style="left:140.9px;top:276.3px" width="11" height="9" viewBox="0 0 11 9"><g fill="none" stroke="#4d9fcc" stroke-width="1.8" stroke-linecap="butt" stroke-linejoin="round"><path d="M3.2 0.1 V5.5 Q3.2 7.2 1.7 7.2 Q0.9 7.2 0.2 6.7"/><path d="M10.1 1.5 Q9.2 1 8 1 Q6.2 1 6.2 2.4 Q6.2 3.5 8 4.05 Q10 4.6 10 5.9 Q10 7.2 8 7.2 Q6.6 7.2 5.6 6.6"/></g></svg><span class="t" style="left:157.66px;top:272.50px;font-size:13px;line-height:16px;color:#cccccc;transform:scaleX(0.9990);">recipes.js</span><svg style="left:140.9px;top:298.3px" width="11" height="9" viewBox="0 0 11 9"><g fill="none" stroke="#4d9fcc" stroke-width="1.8" stroke-linecap="butt" stroke-linejoin="round"><path d="M3.2 0.1 V5.5 Q3.2 7.2 1.7 7.2 Q0.9 7.2 0.2 6.7"/><path d="M10.1 1.5 Q9.2 1 8 1 Q6.2 1 6.2 2.4 Q6.2 3.5 8 4.05 Q10 4.6 10 5.9 Q10 7.2 8 7.2 Q6.6 7.2 5.6 6.6"/></g></svg><span class="t" style="left:157.70px;top:294.50px;font-size:13px;line-height:16px;color:#cccccc;transform:scaleX(0.9812);">users.js</span><svg style="left:132.7px;top:321.4px" width="6" height="6" viewBox="0 0 6 6"><path d="M5.8 0 V5.6 H0.2 Z" fill="#e8e8e8"/></svg><span class="t" style="left:145.56px;top:316.50px;font-size:13px;line-height:16px;color:#cccccc;transform:scaleX(1.0637);">migrations</span><svg style="left:140.9px;top:342.3px" width="11" height="9" viewBox="0 0 11 9"><g fill="none" stroke="#4d9fcc" stroke-width="1.8" stroke-linecap="butt" stroke-linejoin="round"><path d="M3.2 0.1 V5.5 Q3.2 7.2 1.7 7.2 Q0.9 7.2 0.2 6.7"/><path d="M10.1 1.5 Q9.2 1 8 1 Q6.2 1 6.2 2.4 Q6.2 3.5 8 4.05 Q10 4.6 10 5.9 Q10 7.2 8 7.2 Q6.6 7.2 5.6 6.6"/></g></svg><span class="t" style="left:157.82px;top:338.50px;font-size:13px;line-height:16px;color:#cccccc;transform:scaleX(1.0112);">20170829225852-create-user.js</span><svg style="left:140.9px;top:364.3px" width="11" height="9" viewBox="0 0 11 9"><g fill="none" stroke="#4d9fcc" stroke-width="1.8" stroke-linecap="butt" stroke-linejoin="round"><path d="M3.2 0.1 V5.5 Q3.2 7.2 1.7 7.2 Q0.9 7.2 0.2 6.7"/><path d="M10.1 1.5 Q9.2 1 8 1 Q6.2 1 6.2 2.4 Q6.2 3.5 8 4.05 Q10 4.6 10 5.9 Q10 7.2 8 7.2 Q6.6 7.2 5.6 6.6"/></g></svg><span class="t" style="left:157.82px;top:360.50px;font-size:13px;line-height:16px;color:#cccccc;transform:scaleX(1.0136);">20170830085808-create-recipe.js</span><svg style="left:132.7px;top:387.4px" width="6" height="6" viewBox="0 0 6 6"><path d="M5.8 0 V5.6 H0.2 Z" fill="#e8e8e8"/></svg><span class="t" style="left:145.58px;top:382.50px;font-size:13px;line-height:16px;color:#cccccc;transform:scaleX(1.0379);">models</span><svg style="left:140.9px;top:408.3px" width="11" height="9" viewBox="0 0 11 9"><g fill="none" stroke="#4d9fcc" stroke-width="1.8" stroke-linecap="butt" stroke-linejoin="round"><path d="M3.2 0.1 V5.5 Q3.2 7.2 1.7 7.2 Q0.9 7.2 0.2 6.7"/><path d="M10.1 1.5 Q9.2 1 8 1 Q6.2 1 6.2 2.4 Q6.2 3.5 8 4.05 Q10 4.6 10 5.9 Q10 7.2 8 7.2 Q6.6 7.2 5.6 6.6"/></g></svg><span class="t" style="left:157.64px;top:404.50px;font-size:13px;line-height:16px;color:#cccccc;transform:scaleX(1.0244);">index.js</span><svg style="left:140.9px;top:430.3px" width="11" height="9" viewBox="0 0 11 9"><g fill="none" stroke="#4d9fcc" stroke-width="1.8" stroke-linecap="butt" stroke-linejoin="round"><path d="M3.2 0.1 V5.5 Q3.2 7.2 1.7 7.2 Q0.9 7.2 0.2 6.7"/><path d="M10.1 1.5 Q9.2 1 8 1 Q6.2 1 6.2 2.4 Q6.2 3.5 8 4.05 Q10 4.6 10 5.9 Q10 7.2 8 7.2 Q6.6 7.2 5.6 6.6"/></g></svg><span class="t" style="left:157.65px;top:426.50px;font-size:13px;line-height:16px;color:#cccccc;transform:scaleX(1.0148);">recipe.js</span><div class="row sel" style="top:445px"></div><svg style="left:140.9px;top:452.3px" width="11" height="9" viewBox="0 0 11 9"><g fill="none" stroke="#4d9fcc" stroke-width="1.8" stroke-linecap="butt" stroke-linejoin="round"><path d="M3.2 0.1 V5.5 Q3.2 7.2 1.7 7.2 Q0.9 7.2 0.2 6.7"/><path d="M10.1 1.5 Q9.2 1 8 1 Q6.2 1 6.2 2.4 Q6.2 3.5 8 4.05 Q10 4.6 10 5.9 Q10 7.2 8 7.2 Q6.6 7.2 5.6 6.6"/></g></svg><span class="t" style="left:157.69px;top:448.50px;font-size:13px;line-height:16px;color:#cccccc;transform:scaleX(0.9913);">user.js</span><svg style="left:132.9px;top:474.5px" width="5" height="8" viewBox="0 0 5 8"><path d="M0.6 0.9 L4.0 4 L0.6 7.1 Z" fill="none" stroke="#e8e8e8" stroke-width="1.1" stroke-linejoin="miter"/></svg><span class="t" style="left:145.56px;top:470.50px;font-size:13px;line-height:16px;color:#cccccc;transform:scaleX(1.0662);">routes</span><svg style="left:128.9px;top:496.3px" width="11" height="9" viewBox="0 0 11 9"><g fill="none" stroke="#4d9fcc" stroke-width="1.8" stroke-linecap="butt" stroke-linejoin="round"><path d="M3.2 0.1 V5.5 Q3.2 7.2 1.7 7.2 Q0.9 7.2 0.2 6.7"/><path d="M10.1 1.5 Q9.2 1 8 1 Q6.2 1 6.2 2.4 Q6.2 3.5 8 4.05 Q10 4.6 10 5.9 Q10 7.2 8 7.2 Q6.6 7.2 5.6 6.6"/></g></svg><span class="t" style="left:145.85px;top:492.50px;font-size:13px;line-height:16px;color:#cccccc;transform:scaleX(0.9874);">app.js</span><svg style="left:120.8px;top:518.5px" width="5" height="8" viewBox="0 0 5 8"><path d="M0.6 0.9 L4.0 4 L0.6 7.1 Z" fill="none" stroke="#e8e8e8" stroke-width="1.1" stroke-linejoin="miter"/></svg><span class="t" style="left:134.00px;top:514.50px;font-size:13px;line-height:16px;color:#cccccc;transform:scaleX(1.0809);">template</span><svg style="left:116px;top:538px" width="12" height="13" viewBox="0 0 12 13"><path d="M10.2 1.1 Q5.2 2.6 2.6 7.3 Q1.1 10.3 2.7 11.3 Q4.6 12.3 6.9 9.8 Q8.6 7.7 7.4 6.5 Q6 5.4 3.2 8" fill="none" stroke="#cbcb41" stroke-width="1.5" stroke-linecap="round"/></svg><span class="t" style="left:133.14px;top:536.50px;font-size:13px;line-height:16px;color:#cccccc;transform:scaleX(1.0498);">.babelrc</span><svg style="left:115px;top:560px" width="13" height="12" viewBox="0 0 13 12"><path d="M3.3 0.3 H9.7 L12.8 6 L9.7 11.7 H3.3 L0.2 6 Z" fill="#485358"/><circle cx="6.5" cy="6" r="3.9" fill="#323a3e"/><circle cx="6.5" cy="6" r="2.7" fill="#66767c"/></svg><span class="t" style="left:133.11px;top:558.50px;font-size:13px;line-height:16px;color:#cccccc;transform:scaleX(1.0753);">.eslintrc</span><svg style="left:115px;top:582.2px" width="13" height="13" viewBox="0 0 13 13"><circle cx="6.5" cy="6.3" r="6.4" fill="#f2f2f2"/><path d="M3.9 3.2 L4.1 4.6 Q3.4 5.4 3.5 6.6 Q3.7 8.6 5.6 8.9 Q5.1 9.4 5.1 10 Q4.2 10.3 3.7 9.5 Q3.4 9 2.9 9 Q3.4 9.3 3.5 9.9 Q3.9 11.1 5.1 10.9 V12.2 H8 V10 Q8 9.3 7.5 8.9 Q9.4 8.6 9.6 6.6 Q9.7 5.4 9 4.6 L9.2 3.2 Q8.3 3.3 7.7 3.9 Q6.5 3.6 5.4 3.9 Q4.8 3.3 3.9 3.2 Z" fill="#252526"/></svg><span class="t" style="left:133.10px;top:580.50px;font-size:13px;line-height:16px;color:#cccccc;transform:scaleX(1.0852);">.gitignore</span><svg style="left:118px;top:604.8px" width="8" height="13" viewBox="0 0 8 13"><path d="M4.3 0.2 H6.7 L4.9 8.2 H2.9 Z" fill="#a074c4"/><path d="M2.3 9.6 H4.8 L4.2 12.2 H1.7 Z" fill="#a074c4"/></svg><span class="t" style="left:133.14px;top:602.50px;font-size:13px;line-height:16px;color:#cccccc;transform:scaleX(1.0513);">.hound.yml</span><svg style="left:119px;top:628px" width="10" height="11" viewBox="0 0 10 11"><rect x="0.4" y="0.80" width="9.1" height="1.15" fill="#d4d7d6"/><rect x="0.4" y="3.65" width="9.1" height="1.15" fill="#d4d7d6"/><rect x="0.4" y="6.50" width="9.1" height="1.15" fill="#d4d7d6"/><rect x="0.4" y="9.35" width="9.1" height="1.15" fill="#d4d7d6"/></svg><span class="t" style="left:133.17px;top:624.50px;font-size:13px;line-height:16px;color:#cccccc;transform:scaleX(1.0255);">.sequelizerc</span><svg style="left:118px;top:648.8px" width="8" height="13" viewBox="0 0 8 13"><path d="M4.3 0.2 H6.7 L4.9 8.2 H2.9 Z" fill="#a074c4"/><path d="M2.3 9.6 H4.8 L4.2 12.2 H1.7 Z" fill="#a074c4"/></svg><span class="t" style="left:133.14px;top:646.50px;font-size:13px;line-height:16px;color:#cccccc;transform:scaleX(1.0539);">.travis.yml</span><svg style="left:117px;top:668.6px" width="10" height="15" viewBox="0 0 10 15"><circle cx="5" cy="3.4" r="2.4" fill="none" stroke="#cc3e44" stroke-width="1.2"/><path d="M2.6 4.6 Q5 3.2 7.4 4.6 L8.6 9 L9.4 13.6 L7.6 14 L6.2 10.4 L5.2 10.2 L3.8 14.2 L0.8 14.2 L1.4 9 Z" fill="#cc3e44"/><path d="M4.9 6 L5.2 10" stroke="#252526" stroke-width="0.7"/></svg><span class="t" style="left:133.53px;top:668.50px;font-size:13px;line-height:16px;color:#cccccc;transform:scaleX(0.8936);">LICENSE</span><svg style="left:116px;top:692.6px" width="12" height="12" viewBox="0 0 12 12"><g fill="none" stroke="#cbcb41" stroke-width="1.4" stroke-linejoin="round"><path d="M4.3 0.7 Q2.6 0.7 2.6 2.2 V4.3 Q2.6 5.8 1 5.8 Q2.6 5.8 2.6 7.3 V9.4 Q2.6 10.9 4.3 10.9"/><path d="M7.7 0.7 Q9.4 0.7 9.4 2.2 V4.3 Q9.4 5.8 11 5.8 Q9.4 5.8 9.4 7.3 V9.4 Q9.4 10.9 7.7 10.9"/></g></svg><span class="t" style="left:133.56px;top:690.50px;font-size:13px;line-height:16px;color:#cccccc;transform:scaleX(1.0085);">package-lock.json</span><svg style="left:116px;top:714.6px" width="12" height="12" viewBox="0 0 12 12"><g fill="none" stroke="#cbcb41" stroke-width="1.4" stroke-linejoin="round"><path d="M4.3 0.7 Q2.6 0.7 2.6 2.2 V4.3 Q2.6 5.8 1 5.8 Q2.6 5.8 2.6 7.3 V9.4 Q2.6 10.9 4.3 10.9"/><path d="M7.7 0.7 Q9.4 0.7 9.4 2.2 V4.3 Q9.4 5.8 11 5.8 Q9.4 5.8 9.4 7.3 V9.4 Q9.4 10.9 7.7 10.9"/></g></svg><span class="t" style="left:133.56px;top:712.50px;font-size:13px;line-height:16px;color:#cccccc;transform:scaleX(1.0006);">package.json</span><svg style="left:115px;top:735.6px" width="13" height="13" viewBox="0 0 13 13"><circle cx="6.5" cy="6.5" r="5.7" fill="none" stroke="#519aba" stroke-width="1.2"/><circle cx="6.5" cy="3.7" r="1" fill="#519aba"/><path d="M5.3 5.6 H7.2 V9.4 H8 V10.2 H5.2 V9.4 H6 V6.4 H5.3 Z" fill="#519aba"/></svg><span class="t" style="left:133.46px;top:734.50px;font-size:13px;line-height:16px;color:#cccccc;transform:scaleX(0.9773);">README.md</span><div class="abs" style="left:100px;top:166px;width:260px;height:3px;background:linear-gradient(rgba(0,0,0,0.35),rgba(0,0,0,0))"></div><span class="t" style="left:119.70px;top:31.19px;font-size:11px;line-height:16px;color:#bbbbbb;transform:scaleX(0.9113);">EXPLORER</span><div class="hdr" style="top:56px"></div><svg style="left:107.4px;top:63.6px" width="6" height="6" viewBox="0 0 6 6"><path d="M5.8 0 V5.6 H0.2 Z" fill="#e4e4e4"/></svg><span class="t" style="left:120.04px;top:59.19px;font-size:11px;line-height:16px;color:#d8d8d8;font-weight:bold;transform:scaleX(0.9715);">OPEN EDITORS</span><svg style="left:138.0px;top:85.2px" width="11" height="9" viewBox="0 0 11 9"><g fill="none" stroke="#4d9fcc" stroke-width="1.8" stroke-linecap="butt" stroke-linejoin="round"><path d="M3.2 0.1 V5.5 Q3.2 7.2 1.7 7.2 Q0.9 7.2 0.2 6.7"/><path d="M10.1 1.5 Q9.2 1 8 1 Q6.2 1 6.2 2.4 Q6.2 3.5 8 4.05 Q10 4.6 10 5.9 Q10 7.2 8 7.2 Q6.6 7.2 5.6 6.6"/></g></svg><span class="t" style="left:155.97px;top:81.50px;font-size:13px;line-height:16px;color:#e4e4e4;transform:scaleX(0.9916);">recipes.js</span><span class="t" style="left:215.83px;top:81.84px;font-size:12px;line-height:16px;color:#8c8c8c;transform:scaleX(1.0343);">server/controllers</span><div class="row sel" style="top:100px"></div><svg style="left:138.0px;top:107.2px" width="11" height="9" viewBox="0 0 11 9"><g fill="none" stroke="#4d9fcc" stroke-width="1.8" stroke-linecap="butt" stroke-linejoin="round"><path d="M3.2 0.1 V5.5 Q3.2 7.2 1.7 7.2 Q0.9 7.2 0.2 6.7"/><path d="M10.1 1.5 Q9.2 1 8 1 Q6.2 1 6.2 2.4 Q6.2 3.5 8 4.05 Q10 4.6 10 5.9 Q10 7.2 8 7.2 Q6.6 7.2 5.6 6.6"/></g></svg><span class="t" style="left:155.99px;top:103.50px;font-size:13px;line-height:16px;color:#e4e4e4;transform:scaleX(0.9913);">user.js</span><span class="t" style="left:198.74px;top:103.84px;font-size:12px;line-height:16px;color:#8c8c8c;transform:scaleX(1.0102);">server/models</span><svg style="left:138.0px;top:129.2px" width="11" height="9" viewBox="0 0 11 9"><g fill="none" stroke="#4d9fcc" stroke-width="1.8" stroke-linecap="butt" stroke-linejoin="round"><path d="M3.2 0.1 V5.5 Q3.2 7.2 1.7 7.2 Q0.9 7.2 0.2 6.7"/><path d="M10.1 1.5 Q9.2 1 8 1 Q6.2 1 6.2 2.4 Q6.2 3.5 8 4.05 Q10 4.6 10 5.9 Q10 7.2 8 7.2 Q6.6 7.2 5.6 6.6"/></g></svg><span class="t" style="left:156.08px;top:125.50px;font-size:13px;line-height:16px;color:#e4e4e4;font-style:italic;transform:scaleX(0.9690);">recipe.js</span><span class="t" style="left:208.10px;top:125.84px;font-size:12px;line-height:16px;color:#8c8c8c;font-style:italic;transform:scaleX(0.9678);">server/models</span><div class="hdr" style="top:144px"></div><svg style="left:107.4px;top:151.6px" width="6" height="6" viewBox="0 0 6 6"><path d="M5.8 0 V5.6 H0.2 Z" fill="#e4e4e4"/></svg><span class="t" style="left:119.79px;top:147.19px;font-size:11px;line-height:16px;color:#d8d8d8;font-weight:bold;transform:scaleX(0.9596);">BC-26-MORE-RECIPES</span>
<div id="tabs"></div><div class="abs" style="left:360px;top:21px;width:120px;height:35px;background:#2d2d2d"></div><div class="abs" style="left:481px;top:21px;width:119px;height:35px;background:#1e1e1e"></div><div class="abs" style="left:601px;top:21px;width:118px;height:35px;background:#2d2d2d"></div><svg style="left:375.6px;top:34.0px" width="11" height="9" viewBox="0 0 11 9"><g fill="none" stroke="#4d9fcc" stroke-width="1.8" stroke-linecap="butt" stroke-linejoin="round"><path d="M3.2 0.1 V5.5 Q3.2 7.2 1.7 7.2 Q0.9 7.2 0.2 6.7"/><path d="M10.1 1.5 Q9.2 1 8 1 Q6.2 1 6.2 2.4 Q6.2 3.5 8 4.05 Q10 4.6 10 5.9 Q10 7.2 8 7.2 Q6.6 7.2 5.6 6.6"/></g></svg><span class="t" style="left:392.87px;top:30.50px;font-size:13px;line-height:16px;color:#9d9d9d;transform:scaleX(0.9935);">recipes.js</span><svg style="left:495.7px;top:34.0px" width="11" height="9" viewBox="0 0 11 9"><g fill="none" stroke="#4d9fcc" stroke-width="1.8" stroke-linecap="butt" stroke-linejoin="round"><path d="M3.2 0.1 V5.5 Q3.2 7.2 1.7 7.2 Q0.9 7.2 0.2 6.7"/><path d="M10.1 1.5 Q9.2 1 8 1 Q6.2 1 6.2 2.4 Q6.2 3.5 8 4.05 Q10 4.6 10 5.9 Q10 7.2 8 7.2 Q6.6 7.2 5.6 6.6"/></g></svg><span class="t" style="left:512.89px;top:30.50px;font-size:13px;line-height:16px;color:#ffffff;transform:scaleX(0.9885);">user.js</span><svg style="left:580px;top:34px" width="10" height="10" viewBox="0 0 10 10"><path d="M1.6 1.6 L8.4 8.4 M8.4 1.6 L1.6 8.4" stroke="#ffffff" stroke-width="2.2" fill="none"/></svg><svg style="left:615.6px;top:34.0px" width="11" height="9" viewBox="0 0 11 9"><g fill="none" stroke="#4d9fcc" stroke-width="1.8" stroke-linecap="butt" stroke-linejoin="round"><path d="M3.2 0.1 V5.5 Q3.2 7.2 1.7 7.2 Q0.9 7.2 0.2 6.7"/><path d="M10.1 1.5 Q9.2 1 8 1 Q6.2 1 6.2 2.4 Q6.2 3.5 8 4.05 Q10 4.6 10 5.9 Q10 7.2 8 7.2 Q6.6 7.2 5.6 6.6"/></g></svg><span class="t" style="left:633.79px;top:30.50px;font-size:13px;line-height:16px;color:#9d9d9d;font-style:italic;transform:scaleX(0.9502);">recipe.js</span><svg style="left:1277px;top:31px" width="16" height="16" viewBox="0 0 16 16">
<path d="M7.2 3.6 V1.2 H12 L14.6 3.8 V9.4 H12.6" fill="none" stroke="#c5c5c5" stroke-width="1.2"/>
<path d="M11.6 1.2 V4.2 H14.6" fill="none" stroke="#c5c5c5" stroke-width="1"/>
<path d="M4.4 6.4 H1.2 V14.4 H8.4 V12.8" fill="none" stroke="#c5c5c5" stroke-width="1.2"/>
<circle cx="8.4" cy="8.4" r="3.3" fill="none" stroke="#75beff" stroke-width="1.5"/>
<path d="M10.4 10.4 L14.4 14.4" stroke="#75beff" stroke-width="1.7" stroke-linecap="round"/></svg><svg style="left:1309px;top:32px" width="16" height="14" viewBox="0 0 16 14">
<rect x="0.9" y="0.8" width="14.3" height="12.4" fill="#c5c5c5"/>
<rect x="2.3" y="3.8" width="4.9" height="8" fill="#252526"/><rect x="8.8" y="3.8" width="4.9" height="8" fill="#252526"/></svg><svg style="left:1340px;top:35px" width="18" height="8" viewBox="0 0 18 8"><circle cx="3.5" cy="3.6" r="1.55" fill="#c5c5c5"/><circle cx="8.5" cy="3.6" r="1.55" fill="#c5c5c5"/><circle cx="13.5" cy="3.6" r="1.55" fill="#c5c5c5"/></svg><div class="abs topline" style="left:50px;top:21px;width:1316px;height:1px;background:#1f1f1f"></div>
<div id="editor"><div class="abs" style="left:71px;top:266px;width:822px;height:19px;border-top:2px solid #282828;border-bottom:2px solid #282828"></div><div class="ln" style="top:1px">1</div><div class="code" style="top:1px"><span class="k">export</span> <span class="k">default</span> (<span class="v">sequelize</span>, <span class="v">DataTypes</span>) <span class="b">=&gt;</span> {</div><div class="ln" style="top:20px">2</div><div class="code" style="top:20px">  <span class="b">const</span> <span class="v">User</span> = <span class="v">sequelize</span>.<span class="f">define</span>(<span class="s">'User'</span>, {</div><div class="ln" style="top:39px">3</div><div class="code" style="top:39px">    <span class="v">name</span>: {</div><div class="ln" style="top:58px">4</div><div class="code" style="top:58px">      <span class="v">type</span>: <span class="v">DataTypes</span>.<span class="v">STRING</span>,</div><div class="ln" style="top:77px">5</div><div class="code" style="top:77px">      <span class="v">allowNull</span>: <span class="b">false</span>,</div><div class="ln" style="top:96px">6</div><div class="code" style="top:96px">    },</div><div class="ln" style="top:115px">7</div><div class="code" style="top:115px">    <span class="v">username</span>: {</div><div class="ln" style="top:134px">8</div><div class="code" style="top:134px">      <span class="v">type</span>: <span class="v">DataTypes</span>.<span class="v">STRING</span>,</div><div class="ln" style="top:153px">9</div><div class="code" style="top:153px">      <span class="v">unique</span>: <span class="b">true</span>,</div><div class="ln" style="top:172px">10</div><div class="code" style="top:172px">      <span class="v">allowNull</span>: <span class="b">false</span>,</div><div class="ln" style="top:191px">11</div><div class="code" style="top:191px">    },</div><div class="ln" style="top:210px">12</div><div class="code" style="top:210px">    <span class="v">email</span>: {</div><div class="ln" style="top:229px">13</div><div class="code" style="top:229px">      <span class="v">type</span>: <span class="v">DataTypes</span>.<span class="v">STRING</span>,</div><div class="ln" style="top:248px">14</div><div class="code" style="top:248px">      <span class="v">allowNull</span>: <span class="b">false</span>,</div><div class="ln" style="top:267px">15</div><div class="code" style="top:267px">      <span class="v">unique</span>: <span class="b">true</span>,</div><div class="ln" style="top:286px">16</div><div class="code" style="top:286px">      <span class="v">validate</span>: {</div><div class="ln" style="top:305px">17</div><div class="code" style="top:305px">        <span class="v">isEmail</span>: {</div><div class="ln" style="top:324px">18</div><div class="code" style="top:324px">          <span class="v">msg</span>: <span class="s">'Invalid email address'</span></div><div class="ln" style="top:343px">19</div><div class="code" style="top:343px">        }</div><div class="ln" style="top:362px">20</div><div class="code" style="top:362px">      }</div><div class="ln" style="top:381px">21</div><div class="code" style="top:381px">    },</div><div class="ln" style="top:400px">22</div><div class="code" style="top:400px">    <span class="v">password</span>: {</div><div class="ln" style="top:419px">23</div><div class="code" style="top:419px">      <span class="v">type</span>: <span class="v">DataTypes</span>.<span class="v">STRING</span>,</div><div class="ln" style="top:438px">24</div><div class="code" style="top:438px">      <span class="v">allowNull</span>: <span class="b">false</span>,</div><div class="ln" style="top:457px">25</div><div class="code" style="top:457px">      <span class="v">validate</span>: {</div><div class="ln" style="top:476px">26</div><div class="code" style="top:476px">        <span class="v">min</span>: {</div><div class="ln" style="top:495px">27</div><div class="code" style="top:495px">          <span class="v">args</span>: <span class="n">6</span>,</div><div class="ln" style="top:514px">28</div><div class="code" style="top:514px">          <span class="v">msg</span>: <span class="s">'Password must be minimum of 6 characters'</span></div><div class="ln" style="top:533px">29</div><div class="code" style="top:533px">        }</div><div class="ln" style="top:552px">30</div><div class="code" style="top:552px">      }</div><div class="ln" style="top:571px">31</div><div class="code" style="top:571px">    },</div><div class="ln" style="top:590px">32</div><div class="code" style="top:590px">  }, {</div><div class="ln" style="top:609px">33</div><div class="code" style="top:609px">    <span class="v">classMethods</span>: {</div><div class="ln" style="top:628px">34</div><div class="code" style="top:628px">      <span class="v">associate</span>: (<span class="v">models</span>) <span class="b">=&gt;</span> {</div><div class="ln" style="top:647px">35</div><div class="code" style="top:647px">        <span class="v">User</span>.<span class="f">hasMany</span>(<span class="v">models</span>.<span class="v">Recipe</span>, {</div><div class="ln" style="top:666px">36</div><div class="code" style="top:666px">          <span class="v">foreignKey</span>: <span class="s">'userId'</span></div><div class="ln" style="top:685px">37</div><div class="code" style="top:685px">        });</div><div class="g" style="left:70px;top:19px;height:684px"></div><div class="g" style="left:87px;top:38px;height:551px"></div><div class="g" style="left:87px;top:608px;height:95px"></div><div class="g" style="left:104px;top:57px;height:38px"></div><div class="g" style="left:104px;top:133px;height:57px"></div><div class="g" style="left:104px;top:228px;height:152px"></div><div class="g" style="left:104px;top:418px;height:152px"></div><div class="g" style="left:104px;top:627px;height:76px"></div><div class="g" style="left:120px;top:304px;height:57px"></div><div class="g" style="left:120px;top:475px;height:76px"></div><div class="g" style="left:120px;top:646px;height:57px"></div><div class="g" style="left:137px;top:323px;height:19px"></div><div class="g" style="left:137px;top:494px;height:38px"></div><div class="g" style="left:137px;top:665px;height:19px"></div><div class="abs" style="left:112px;top:266px;width:2px;height:19px;background:#b4b4b2"></div><svg style="left:893px;top:0" width="100" height="90" viewBox="0 0 100 90" ><rect x="0.7" y="0.45" width="6" height="1.25" fill="#c586c0" opacity="0.55"/><rect x="7.7" y="0.45" width="7" height="1.25" fill="#c586c0" opacity="0.55"/><rect x="15.7" y="0.45" width="1" height="1.25" fill="#d4d4d4" opacity="0.38"/><rect x="16.7" y="0.45" width="9" height="1.25" fill="#9cdcfe" opacity="0.55"/><rect x="25.7" y="0.45" width="1" height="1.25" fill="#d4d4d4" opacity="0.38"/><rect x="27.7" y="0.45" width="9" height="1.25" fill="#9cdcfe" opacity="0.55"/><rect x="36.7" y="0.45" width="1" height="1.25" fill="#d4d4d4" opacity="0.38"/><rect x="38.7" y="0.45" width="2" height="1.25" fill="#569cd6" opacity="0.55"/><rect x="41.7" y="0.45" width="1" height="1.25" fill="#d4d4d4" opacity="0.38"/><rect x="2.7" y="2.45" width="5" height="1.25" fill="#569cd6" opacity="0.55"/><rect x="8.7" y="2.45" width="4" height="1.25" fill="#9cdcfe" opacity="0.55"/><rect x="13.7" y="2.45" width="1" height="1.25" fill="#d4d4d4" opacity="0.38"/><rect x="15.7" y="2.45" width="9" height="1.25" fill="#9cdcfe" opacity="0.55"/><rect x="24.7" y="2.45" width="1" height="1.25" fill="#d4d4d4" opacity="0.38"/><rect x="25.7" y="2.45" width="6" height="1.25" fill="#dcdcaa" opacity="0.55"/><rect x="31.7" y="2.45" width="1" height="1.25" fill="#d4d4d4" opacity="0.38"/><rect x="32.7" y="2.45" width="6" height="1.25" fill="#ce9178" opacity="0.55"/><rect x="38.7" y="2.45" width="1" height="1.25" fill="#d4d4d4" opacity="0.38"/><rect x="40.7" y="2.45" width="1" height="1.25" fill="#d4d4d4" opacity="0.38"/><rect x="4.7" y="4.45" width="4" height="1.25" fill="#9cdcfe" opacity="0.55"/><rect x="8.7" y="4.45" width="1" height="1.25" fill="#d4d4d4" opacity="0.38"/><rect x="10.7" y="4.45" width="1" height="1.25" fill="#d4d4d4" opacity="0.38"/><rect x="6.7" y="6.45" width="4" height="1.25" fill="#9cdcfe" opacity="0.55"/><rect x="10.7" y="6.45" width="1" height="1.25" fill="#d4d4d4" opacity="0.38"/><rect x="12.7" y="6.45" width="9" height="1.25" fill="#9cdcfe" opacity="0.55"/><rect x="21.7" y="6.45" width="1" height="1.25" fill="#d4d4d4" opacity="0.38"/><rect x="22.7" y="6.45" width="6" height="1.25" fill="#9cdcfe" opacity="0.55"/><rect x="28.7" y="6.45" width="1" height="1.25" fill="#d4d4d4" opacity="0.38"/><rect x="6.7" y="8.45" width="9" height="1.25" fill="#9cdcfe" opacity="0.55"/><rect x="15.7" y="8.45" width="1" height="1.25" fill="#d4d4d4" opacity="0.38"/><rect x="17.7" y="8.45" width="5" height="1.25" fill="#569cd6" opacity="0.55"/><rect x="22.7" y="8.45" width="1" height="1.25" fill="#d4d4d4" opacity="0.38"/><rect x="4.7" y="10.45" width="2" height="1.25" fill="#d4d4d4" opacity="0.38"/><rect x="4.7" y="12.45" width="8" height="1.25" fill="#9cdcfe" opacity="0.55"/><rect x="12.7" y="12.45" width="1" height="1.25" fill="#d4d4d4" opacity="0.38"/><rect x="14.7" y="12.45" width="1" height="1.25" fill="#d4d4d4" opacity="0.38"/><rect x="6.7" y="14.45" width="4" height="1.25" fill="#9cdcfe" opacity="0.55"/><rect x="10.7" y="14.45" width="1" height="1.25" fill="#d4d4d4" opacity="0.38"/><rect x="12.7" y="14.45" width="9" height="1.25" fill="#9cdcfe" opacity="0.55"/><rect x="21.7" y="14.45" width="1" height="1.25" fill="#d4d4d4" opacity="0.38"/><rect x="22.7" y="14.45" width="6" height="1.25" fill="#9cdcfe" opacity="0.55"/><rect x="28.7" y="14.45" width="1" height="1.25" fill="#d4d4d4" opacity="0.38"/><rect x="6.7" y="16.45" width="6" height="1.25" fill="#9cdcfe" opacity="0.55"/><rect x="12.7" y="16.45" width="1" height="1.25" fill="#d4d4d4" opacity="0.38"/><rect x="14.7" y="16.45" width="4" height="1.25" fill="#569cd6" opacity="0.55"/><rect x="18.7" y="16.45" width="1" height="1.25" fill="#d4d4d4" opacity="0.38"/><rect x="6.7" y="18.45" width="9" height="1.25" fill="#9cdcfe" opacity="0.55"/><rect x="15.7" y="18.45" width="1" height="1.25" fill="#d4d4d4" opacity="0.38"/><rect x="17.7" y="18.45" width="5" height="1.25" fill="#569cd6" opacity="0.55"/><rect x="22.7" y="18.45" width="1" height="1.25" fill="#d4d4d4" opacity="0.38"/><rect x="4.7" y="20.45" width="2" height="1.25" fill="#d4d4d4" opacity="0.38"/><rect x="4.7" y="22.45" width="5" height="1.25" fill="#9cdcfe" opacity="0.55"/><rect x="9.7" y="22.45" width="1" height="1.25" fill="#d4d4d4" opacity="0.38"/><rect x="11.7" y="22.45" width="1" height="1.25" fill="#d4d4d4" opacity="0.38"/><rect x="6.7" y="24.45" width="4" height="1.25" fill="#9cdcfe" opacity="0.55"/><rect x="10.7" y="24.45" width="1" height="1.25" fill="#d4d4d4" opacity="0.38"/><rect x="12.7" y="24.45" width="9" height="1.25" fill="#9cdcfe" opacity="0.55"/><rect x="21.7" y="24.45" width="1" height="1.25" fill="#d4d4d4" opacity="0.38"/><rect x="22.7" y="24.45" width="6" height="1.25" fill="#9cdcfe" opacity="0.55"/><rect x="28.7" y="24.45" width="1" height="1.25" fill="#d4d4d4" opacity="0.38"/><rect x="6.7" y="26.45" width="9" height="1.25" fill="#9cdcfe" opacity="0.55"/><rect x="15.7" y="26.45" width="1" height="1.25" fill="#d4d4d4" opacity="0.38"/><rect x="17.7" y="26.45" width="5" height="1.25" fill="#569cd6" opacity="0.55"/><rect x="22.7" y="26.45" width="1" height="1.25" fill="#d4d4d4" opacity="0.38"/><rect x="6.7" y="28.45" width="6" height="1.25" fill="#9cdcfe" opacity="0.55"/><rect x="12.7" y="28.45" width="1" height="1.25" fill="#d4d4d4" opacity="0.38"/><rect x="14.7" y="28.45" width="4" height="1.25" fill="#569cd6" opacity="0.55"/><rect x="18.7" y="28.45" width="1" height="1.25" fill="#d4d4d4" opacity="0.38"/><rect x="6.7" y="30.45" width="8" height="1.25" fill="#9cdcfe" opacity="0.55"/><rect x="14.7" y="30.45" width="1" height="1.25" fill="#d4d4d4" opacity="0.38"/><rect x="16.7" y="30.45" width="1" height="1.25" fill="#d4d4d4" opacity="0.38"/><rect x="8.7" y="32.45" width="7" height="1.25" fill="#9cdcfe" opacity="0.55"/><rect x="15.7" y="32.45" width="1" height="1.25" fill="#d4d4d4" opacity="0.38"/><rect x="17.7" y="32.45" width="1" height="1.25" fill="#d4d4d4" opacity="0.38"/><rect x="10.7" y="34.45" width="3" height="1.25" fill="#9cdcfe" opacity="0.55"/><rect x="13.7" y="34.45" width="1" height="1.25" fill="#d4d4d4" opacity="0.38"/><rect x="15.7" y="34.45" width="8" height="1.25" fill="#ce9178" opacity="0.55"/><rect x="24.7" y="34.45" width="5" height="1.25" fill="#ce9178" opacity="0.55"/><rect x="30.7" y="34.45" width="8" height="1.25" fill="#ce9178" opacity="0.55"/><rect x="8.7" y="36.45" width="1" height="1.25" fill="#d4d4d4" opacity="0.38"/><rect x="6.7" y="38.45" width="1" height="1.25" fill="#d4d4d4" opacity="0.38"/><rect x="4.7" y="40.45" width="2" height="1.25" fill="#d4d4d4" opacity="0.38"/><rect x="4.7" y="42.45" width="8" height="1.25" fill="#9cdcfe" opacity="0.55"/><rect x="12.7" y="42.45" width="1" height="1.25" fill="#d4d4d4" opacity="0.38"/><rect x="14.7" y="42.45" width="1" height="1.25" fill="#d4d4d4" opacity="0.38"/><rect x="6.7" y="44.45" width="4" height="1.25" fill="#9cdcfe" opacity="0.55"/><rect x="10.7" y="44.45" width="1" height="1.25" fill="#d4d4d4" opacity="0.38"/><rect x="12.7" y="44.45" width="9" height="1.25" fill="#9cdcfe" opacity="0.55"/><rect x="21.7" y="44.45" width="1" height="1.25" fill="#d4d4d4" opacity="0.38"/><rect x="22.7" y="44.45" width="6" height="1.25" fill="#9cdcfe" opacity="0.55"/><rect x="28.7" y="44.45" width="1" height="1.25" fill="#d4d4d4" opacity="0.38"/><rect x="6.7" y="46.45" width="9" height="1.25" fill="#9cdcfe" opacity="0.55"/><rect x="15.7" y="46.45" width="1" height="1.25" fill="#d4d4d4" opacity="0.38"/><rect x="17.7" y="46.45" width="5" height="1.25" fill="#569cd6" opacity="0.55"/><rect x="22.7" y="46.45" width="1" height="1.25" fill="#d4d4d4" opacity="0.38"/><rect x="6.7" y="48.45" width="8" height="1.25" fill="#9cdcfe" opacity="0.55"/><rect x="14.7" y="48.45" width="1" height="1.25" fill="#d4d4d4" opacity="0.38"/><rect x="16.7" y="48.45" width="1" height="1.25" fill="#d4d4d4" opacity="0.38"/><rect x="8.7" y="50.45" width="3" height="1.25" fill="#9cdcfe" opacity="0.55"/><rect x="11.7" y="50.45" width="1" height="1.25" fill="#d4d4d4" opacity="0.38"/><rect x="13.7" y="50.45" width="1" height="1.25" fill="#d4d4d4" opacity="0.38"/><rect x="10.7" y="52.45" width="4" height="1.25" fill="#9cdcfe" opacity="0.55"/><rect x="14.7" y="52.45" width="1" height="1.25" fill="#d4d4d4" opacity="0.38"/><rect x="16.7" y="52.45" width="1" height="1.25" fill="#b5cea8" opacity="0.55"/><rect x="17.7" y="52.45" width="1" height="1.25" fill="#d4d4d4" opacity="0.38"/><rect x="10.7" y="54.45" width="3" height="1.25" fill="#9cdcfe" opacity="0.55"/><rect x="13.7" y="54.45" width="1" height="1.25" fill="#d4d4d4" opacity="0.38"/><rect x="15.7" y="54.45" width="9" height="1.25" fill="#ce9178" opacity="0.55"/><rect x="25.7" y="54.45" width="4" height="1.25" fill="#ce9178" opacity="0.55"/><rect x="30.7" y="54.45" width="2" height="1.25" fill="#ce9178" opacity="0.55"/><rect x="33.7" y="54.45" width="7" height="1.25" fill="#ce9178" opacity="0.55"/><rect x="41.7" y="54.45" width="2" height="1.25" fill="#ce9178" opacity="0.55"/><rect x="44.7" y="54.45" width="1" height="1.25" fill="#ce9178" opacity="0.55"/><rect x="46.7" y="54.45" width="11" height="1.25" fill="#ce9178" opacity="0.55"/><rect x="8.7" y="56.45" width="1" height="1.25" fill="#d4d4d4" opacity="0.38"/><rect x="6.7" y="58.45" width="1" height="1.25" fill="#d4d4d4" opacity="0.38"/><rect x="4.7" y="60.45" width="2" height="1.25" fill="#d4d4d4" opacity="0.38"/><rect x="2.7" y="62.45" width="2" height="1.25" fill="#d4d4d4" opacity="0.38"/><rect x="5.7" y="62.45" width="1" height="1.25" fill="#d4d4d4" opacity="0.38"/><rect x="4.7" y="64.45" width="12" height="1.25" fill="#9cdcfe" opacity="0.55"/><rect x="16.7" y="64.45" width="1" height="1.25" fill="#d4d4d4" opacity="0.38"/><rect x="18.7" y="64.45" width="1" height="1.25" fill="#d4d4d4" opacity="0.38"/><rect x="6.7" y="66.45" width="9" height="1.25" fill="#9cdcfe" opacity="0.55"/><rect x="15.7" y="66.45" width="1" height="1.25" fill="#d4d4d4" opacity="0.38"/><rect x="17.7" y="66.45" width="1" height="1.25" fill="#d4d4d4" opacity="0.38"/><rect x="18.7" y="66.45" width="6" height="1.25" fill="#9cdcfe" opacity="0.55"/><rect x="24.7" y="66.45" width="1" height="1.25" fill="#d4d4d4" opacity="0.38"/><rect x="26.7" y="66.45" width="2" height="1.25" fill="#569cd6" opacity="0.55"/><rect x="29.7" y="66.45" width="1" height="1.25" fill="#d4d4d4" opacity="0.38"/><rect x="8.7" y="68.45" width="4" height="1.25" fill="#9cdcfe" opacity="0.55"/><rect x="12.7" y="68.45" width="1" height="1.25" fill="#d4d4d4" opacity="0.38"/><rect x="13.7" y="68.45" width="7" height="1.25" fill="#dcdcaa" opacity="0.55"/><rect x="20.7" y="68.45" width="1" height="1.25" fill="#d4d4d4" opacity="0.38"/><rect x="21.7" y="68.45" width="6" height="1.25" fill="#9cdcfe" opacity="0.55"/><rect x="27.7" y="68.45" width="1" height="1.25" fill="#d4d4d4" opacity="0.38"/><rect x="28.7" y="68.45" width="6" height="1.25" fill="#9cdcfe" opacity="0.55"/><rect x="34.7" y="68.45" width="1" height="1.25" fill="#d4d4d4" opacity="0.38"/><rect x="36.7" y="68.45" width="1" height="1.25" fill="#d4d4d4" opacity="0.38"/><rect x="10.7" y="70.45" width="10" height="1.25" fill="#9cdcfe" opacity="0.55"/><rect x="20.7" y="70.45" width="1" height="1.25" fill="#d4d4d4" opacity="0.38"/><rect x="22.7" y="70.45" width="8" height="1.25" fill="#ce9178" opacity="0.55"/><rect x="8.7" y="72.45" width="3" height="1.25" fill="#d4d4d4" opacity="0.38"/><rect x="6.7" y="74.45" width="1" height="1.25" fill="#d4d4d4" opacity="0.38"/><rect x="4.7" y="76.45" width="1" height="1.25" fill="#d4d4d4" opacity="0.38"/><rect x="2.7" y="78.45" width="3" height="1.25" fill="#d4d4d4" opacity="0.38"/><rect x="2.7" y="80.45" width="6" height="1.25" fill="#c586c0" opacity="0.55"/><rect x="9.7" y="80.45" width="4" height="1.25" fill="#9cdcfe" opacity="0.55"/><rect x="13.7" y="80.45" width="1" height="1.25" fill="#d4d4d4" opacity="0.38"/><rect x="0.7" y="82.45" width="2" height="1.25" fill="#d4d4d4" opacity="0.38"/></svg><div class="abs" style="left:992px;top:0;width:1px;height:690px;background:#3c3c3c"></div><div class="abs" style="left:993px;top:123px;width:13px;height:2px;background:#a6a6a6"></div></div>
<div id="status"></div><svg style="left:64px;top:749px" width="10" height="15" viewBox="0 0 10 15"><g fill="none" stroke="#ffffff" stroke-width="1.2">
<circle cx="2.6" cy="2.9" r="1.6"/><circle cx="2.6" cy="12" r="1.6"/><circle cx="7.4" cy="4.9" r="1.6"/>
<path d="M2.6 4.5 V10.4"/><path d="M7.4 6.5 Q7.4 8.6 2.8 9.6"/></g></svg><span class="t" style="left:76.64px;top:748.50px;font-size:13px;line-height:16px;color:#ffffff;transform:scaleX(0.9514);">ft-add-recipe-150496874*</span><svg style="left:232px;top:751px" width="15" height="11" viewBox="0 0 15 11"><path d="M4.6 9.6 H3.6 Q0.8 9.4 0.8 6.9 Q0.9 4.8 3.2 4.5 Q3.8 1.2 7 0.9 Q10.2 1 10.9 3.9 Q14.1 4 14.2 6.9 Q14 9.4 11.4 9.6 H10.2" fill="none" stroke="#ffffff" stroke-width="1.3"/><path d="M7.4 10.8 V5.6 M5.2 7.6 L7.4 5.2 L9.6 7.6" fill="none" stroke="#ffffff" stroke-width="1.4"/></svg><svg style="left:259px;top:752px" width="11" height="11" viewBox="0 0 11 11"><circle cx="5.5" cy="5.5" r="5.2" fill="#ffffff"/><path d="M3.3 3.3 L7.7 7.7 M7.7 3.3 L3.3 7.7" stroke="#007acc" stroke-width="1.5"/></svg><span class="t" style="left:274.39px;top:748.50px;font-size:13px;line-height:16px;color:#ffffff;transform:scaleX(0.7343);">1</span><svg style="left:286px;top:752px" width="11" height="11" viewBox="0 0 11 11"><path d="M5.5 0.4 L10.8 10.4 H0.2 Z" fill="#ffffff"/><rect x="4.85" y="3.8" width="1.3" height="3.6" fill="#007acc"/><rect x="4.85" y="8.1" width="1.3" height="1.3" fill="#007acc"/></svg><span class="t" style="left:301.42px;top:748.50px;font-size:13px;line-height:16px;color:#ffffff;transform:scaleX(0.8847);">0</span><span class="t" style="left:997.83px;top:748.50px;font-size:13px;line-height:16px;color:#ffffff;transform:scaleX(0.8997);">Ln 15, Col 6</span><span class="t" style="left:1075.23px;top:748.50px;font-size:13px;line-height:16px;color:#ffffff;transform:scaleX(0.8663);">Spaces: 2</span><span class="t" style="left:1139.96px;top:748.50px;font-size:13px;line-height:16px;color:#ffffff;transform:scaleX(0.8865);">UTF-8</span><span class="t" style="left:1187.51px;top:748.50px;font-size:13px;line-height:16px;color:#ffffff;transform:scaleX(0.8050);">LF</span><span class="t" style="left:1215.27px;top:748.50px;font-size:13px;line-height:16px;color:#ffffff;transform:scaleX(0.9105);">JavaScript</span><span class="t" style="left:1285.53px;top:748.50px;font-size:13px;line-height:16px;color:#ffffff;transform:scaleX(0.8950);">ESLint</span><svg style="left:1335px;top:750px" width="15" height="15" viewBox="0 0 15 15"><circle cx="7.9" cy="7.3" r="6.9" fill="#ffffff"/><circle cx="5.4" cy="5.4" r="1.15" fill="#007acc"/><circle cx="10.4" cy="5.4" r="1.15" fill="#007acc"/><path d="M3.7 8.4 Q7.9 13.6 12.1 8.4" fill="none" stroke="#007acc" stroke-width="1.3"/></svg>
</body></html>
